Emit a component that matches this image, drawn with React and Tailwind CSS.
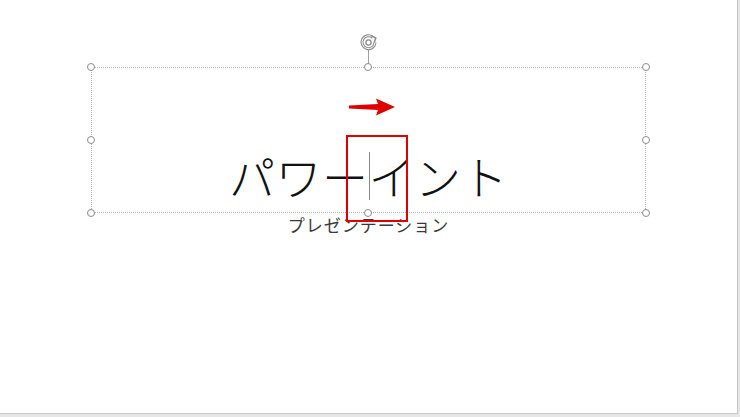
import React from "react";

const Handle = ({ x, y }) => (
  <div
    className="absolute w-[8px] h-[8px] rounded-full border border-[#8c8c8c] bg-white"
    style={{ left: x - 4, top: y - 4 }}
  />
);

export default function App() {
  const handles = [
    [91, 67], [368, 67], [646, 67],
    [91, 140], [646, 140],
    [91, 213], [368, 213], [646, 213],
  ];
  return (
    <div className="w-[740px] h-[417px] bg-[#e6e6e6] overflow-hidden font-['Noto_Sans_CJK_JP',sans-serif]">
      <div className="relative w-[738px] h-[414px] bg-white border-r border-b border-[#c8c8c8]">
        {/* title text box (selected) */}
        <div className="absolute left-[91px] top-[67px] w-[555px] h-[146px] border border-dotted border-[#b4b4b4] flex flex-col justify-end items-center">
          <span className="text-[46px] leading-[70px] font-extralight text-[#111] mb-[2px] tracking-[0.5px]">
            パワーイント
          </span>
        </div>

        {/* subtitle box */}
        <div className="absolute left-[91px] top-[212px] w-[555px] flex justify-center">
          <span className="text-[17px] leading-[26px] text-[#3a3a3a] tracking-[1px]">
            プレゼンテーション
          </span>
        </div>

        {/* rotation handle */}
        <div className="absolute left-[368px] top-[50px] w-px h-[15px] bg-[#a0a0a0]" />
        <svg className="absolute left-[359px] top-[32px]" width="20" height="20" viewBox="0 0 20 20">
          <path d="M16 10.5a6.5 6.5 0 1 1-2.2-5.2" fill="none" stroke="#8c8c8c" strokeWidth="3" />
          <path d="M16 10.5a6.5 6.5 0 1 1-2.2-5.2" fill="none" stroke="#fff" strokeWidth="1" />
          <circle cx="9.5" cy="10.5" r="2.6" fill="none" stroke="#8c8c8c" strokeWidth="1.3" />
          <path d="M12.2 3.6l4.6 2.6-1.8 4.4" fill="none" stroke="#8c8c8c" strokeWidth="1.5" />
        </svg>
        {handles.map(([x, y]) => (
          <Handle key={`${x}-${y}`} x={x} y={y} />
        ))}

        {/* text cursor */}
        <div className="absolute left-[369px] top-[152px] w-px h-[48px] bg-[#8a8a8a]" />

        {/* red highlight */}
        <div className="absolute left-[346px] top-[135px] w-[62px] h-[87px] border-[2.5px] border-[#e00000]" />
        <svg className="absolute left-[348px] top-[97px]" width="48" height="20" viewBox="0 0 48 20">
          <path d="M1 8.5 L30 7 L28 1.5 L47 10 L28 18.5 L30 13 L1 11.5 Z" fill="#e00000" />
        </svg>
      </div>
    </div>
  );
}
